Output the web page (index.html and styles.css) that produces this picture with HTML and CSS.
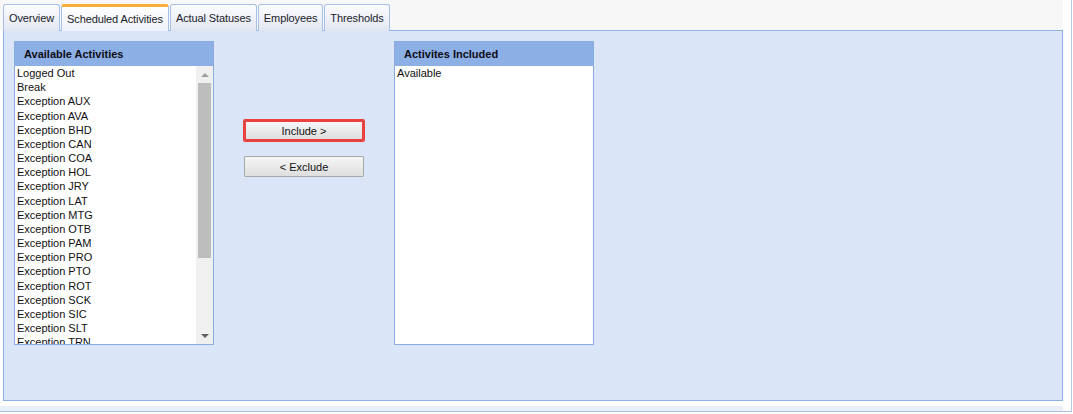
FILE: index.html
```html
<!DOCTYPE html>
<html lang="en">
<head>
  <meta charset="UTF-8">
  <title>Scheduled Activities</title>
  <link rel="stylesheet" href="styles.css">
</head>
<body>
  <div class="frame">
    <div class="tab-strip">
      <div class="tab">Overview</div>
      <div class="tab active">Scheduled Activities</div>
      <div class="tab">Actual Statuses</div>
      <div class="tab">Employees</div>
      <div class="tab">Thresholds</div>
    </div>

    <div class="panel">
      <div class="box">
        <div class="box-header">Available Activities</div>
        <div class="box-body">
          <ul class="list">
            <li>Logged Out</li>
            <li>Break</li>
            <li>Exception AUX</li>
            <li>Exception AVA</li>
            <li>Exception BHD</li>
            <li>Exception CAN</li>
            <li>Exception COA</li>
            <li>Exception HOL</li>
            <li>Exception JRY</li>
            <li>Exception LAT</li>
            <li>Exception MTG</li>
            <li>Exception OTB</li>
            <li>Exception PAM</li>
            <li>Exception PRO</li>
            <li>Exception PTO</li>
            <li>Exception ROT</li>
            <li>Exception SCK</li>
            <li>Exception SIC</li>
            <li>Exception SLT</li>
            <li>Exception TRN</li>
          </ul>
          <div class="scrollbar">
            <div class="arrow up"></div>
            <div class="thumb"></div>
            <div class="arrow down"></div>
          </div>
        </div>
      </div>

      <div class="actions">
        <button class="btn highlighted">Include &gt;</button>
        <button class="btn">&lt; Exclude</button>
      </div>

      <div class="box">
        <div class="box-header">Activites Included</div>
        <div class="box-body">
          <ul class="list">
            <li>Available</li>
          </ul>
        </div>
      </div>
    </div>
    <div class="frame-foot"></div>
  </div>
</body>
</html>
```

FILE: styles.css
```css
* {
  margin: 0;
  padding: 0;
  box-sizing: border-box;
}

body {
  font-family: "Liberation Sans", Arial, sans-serif;
  font-size: 11px;
  color: #111;
  background: #fff;
  width: 1073px;
  height: 414px;
  overflow: hidden;
}

.frame {
  width: 1072px;
  height: 412px;
  border-right: 1px solid #b4c8ea;
  border-bottom: 1px solid #a9bfe4;
  padding-right: 8px;
  display: flex;
  flex-direction: column;
}

.tab-strip {
  height: 30px;
  flex-shrink: 0;
  background: #f7f7f7;
  display: flex;
  align-items: flex-end;
  padding-left: 3px;
}

.tab {
  height: 27px;
  margin-bottom: -1px;
  margin-right: 1px;
  padding: 0 5px 1px;
  display: flex;
  align-items: center;
  border: 1px solid #a9c0e6;
  border-bottom: none;
  border-radius: 3px 3px 0 0;
  background: linear-gradient(#fbfcfe, #e2e6f2);
  color: #1b1b2b;
  letter-spacing: -0.1px;
  position: relative;
  z-index: 1;
}

.tab.active {
  background: linear-gradient(#ffffff, #eef1f8);
  border-top: 3px solid #f8ae3a;
  z-index: 2;
}

.panel {
  flex: 1;
  margin-left: 3px;
  border: 1px solid #8fb0e2;
  background: #dae5f8;
  display: flex;
  align-items: flex-start;
  padding: 10px 10px;
}

.frame-foot {
  height: 10px;
  flex-shrink: 0;
  background: linear-gradient(#fff 0, #fff 5px, #e8eff9 5px);
}

.box {
  width: 200px;
  height: 304px;
  border: 1px solid #8aaddf;
  background: #fff;
  display: flex;
  flex-direction: column;
}

.box-header {
  height: 24px;
  background: #8cafe6;
  font-weight: bold;
  display: flex;
  align-items: center;
  padding-left: 9px;
  color: #0c0c14;
}

.box-body {
  flex: 1;
  display: flex;
  overflow: hidden;
}

.list {
  list-style: none;
  flex: 1;
  padding-left: 2px;
  overflow: hidden;
}

.list li {
  line-height: 14.17px;
  white-space: nowrap;
}

.scrollbar {
  width: 17px;
  background: #f0f0f0;
  display: flex;
  flex-direction: column;
  align-items: center;
}

.arrow {
  height: 17px;
  width: 100%;
  display: flex;
  align-items: center;
  justify-content: center;
}

.arrow::before {
  content: "";
  border-left: 4px solid transparent;
  border-right: 4px solid transparent;
}

.arrow.up::before {
  border-bottom: 4px solid #a0a0a0;
}

.arrow.down {
  margin-top: auto;
}

.arrow.down::before {
  border-top: 4px solid #606060;
}

.thumb {
  width: 13px;
  height: 175px;
  background: #bdbdbd;
}

.actions {
  width: 180px;
  padding: 79px 30px 0;
  display: flex;
  flex-direction: column;
  gap: 15px;
}

.btn {
  width: 120px;
  height: 21px;
  font-family: inherit;
  font-size: 11px;
  color: #111;
  border: 1px solid #a7a7a7;
  border-radius: 1px;
  background: linear-gradient(#f6f6f6, #dedede);
}

.btn.highlighted {
  border: 2px solid #e8413f;
  box-shadow: 0 0 0 1px #e8413f;
}
```
